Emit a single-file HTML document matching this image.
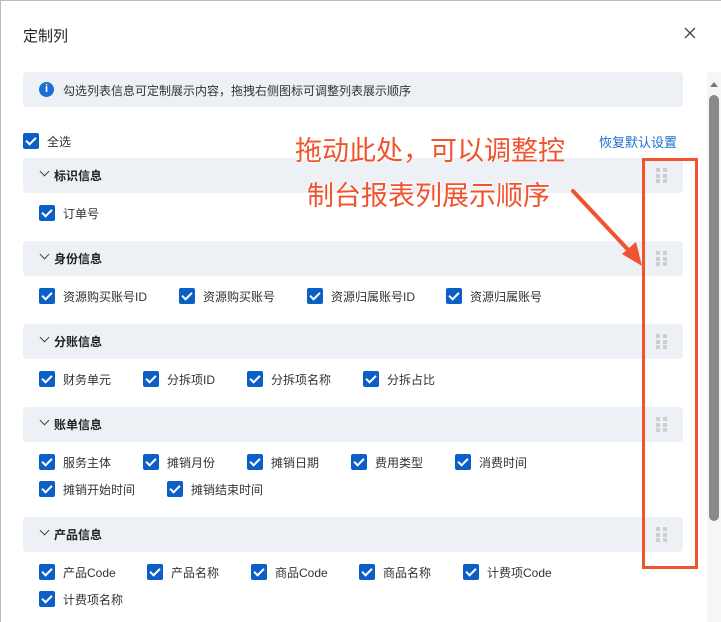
<!DOCTYPE html><html><head><meta charset="utf-8"><style>
body{margin:0;width:721px;height:622px;overflow:hidden;background:#fff;font-family:"Liberation Sans","Noto Sans CJK SC",sans-serif;position:relative}
.a{position:absolute}
.t{font-size:12px;color:#333;white-space:nowrap;margin-top:-1px}
.cb{position:absolute;width:16px;height:16px;background:#0b5fc6;border-radius:2px}
.cb:after{content:"";position:absolute;left:5px;top:2px;width:4px;height:8px;border:solid #fff;border-width:0 2px 2px 0;transform:rotate(45deg)}
.sec{position:absolute;left:23px;width:660px;height:35px;background:#edf0f5;border-radius:4px}
.sec span{position:absolute;left:31px;top:9px;font-size:12px;font-weight:bold;color:#222}
.sec i{position:absolute;left:18px;top:10px;width:6px;height:6px;border:solid #444;border-width:0 1.5px 1.5px 0;transform:rotate(45deg)}
.dr{position:absolute;left:633px;top:10px;width:11px;height:15px;background:
linear-gradient(#cfcfcf,#cfcfcf) 0 0/4px 4px,linear-gradient(#cfcfcf,#cfcfcf) 7px 0/4px 4px,
linear-gradient(#cfcfcf,#cfcfcf) 0 5.5px/4px 4px,linear-gradient(#cfcfcf,#cfcfcf) 7px 5.5px/4px 4px,
linear-gradient(#cfcfcf,#cfcfcf) 0 11px/4px 4px,linear-gradient(#cfcfcf,#cfcfcf) 7px 11px/4px 4px;background-repeat:no-repeat}
.red{position:absolute;color:#f0542e;font-size:27px;white-space:nowrap;text-shadow:0 0 2px #fff,0 0 2px #fff,0 0 3px #fff}
</style></head><body>
<div class="a" style="left:0;top:0;width:721px;height:1px;background:#bbb"></div>
<div class="a" style="left:0;top:0;width:1px;height:622px;background:#bbb"></div>
<div class="a" style="left:23px;top:25px;font-size:15px;color:#222">定制列</div>
<svg class="a" style="left:684px;top:27px" width="12" height="12"><path d="M1 1L11 11M11 1L1 11" stroke="#444" stroke-width="1.3"/></svg>
<div class="a" style="left:23px;top:72px;width:660px;height:35px;background:#edf0f5;border-radius:4px"></div>
<div class="a" style="left:39px;top:82px;width:15px;height:15px;border-radius:50%;background:#1a6fd1;color:#fff;font-size:11px;font-weight:bold;text-align:center;line-height:15px">i</div>
<div class="a t" style="left:63px;top:83px">勾选列表信息可定制展示内容，拖拽右侧图标可调整列表展示顺序</div>
<div class="cb" style="left:23px;top:133px"></div><div class="a t" style="left:47px;top:134px">全选</div>
<div class="a" style="left:599px;top:132px;font-size:13px;color:#1a6fd1">恢复默认设置</div>

<div class="sec" style="top:158px"><i></i><span>标识信息</span><div class="dr"></div></div>
<div class="cb" style="left:39px;top:205px"></div><div class="a t" style="left:63px;top:206px">订单号</div>

<div class="sec" style="top:241px"><i></i><span>身份信息</span><div class="dr"></div></div>
<div class="cb" style="left:39px;top:288px"></div><div class="a t" style="left:63px;top:289px">资源购买账号ID</div>
<div class="cb" style="left:179px;top:288px"></div><div class="a t" style="left:203px;top:289px">资源购买账号</div>
<div class="cb" style="left:307px;top:288px"></div><div class="a t" style="left:331px;top:289px">资源归属账号ID</div>
<div class="cb" style="left:446px;top:288px"></div><div class="a t" style="left:470px;top:289px">资源归属账号</div>

<div class="sec" style="top:324px"><i></i><span>分账信息</span><div class="dr"></div></div>
<div class="cb" style="left:39px;top:371px"></div><div class="a t" style="left:63px;top:372px">财务单元</div>
<div class="cb" style="left:143px;top:371px"></div><div class="a t" style="left:167px;top:372px">分拆项ID</div>
<div class="cb" style="left:247px;top:371px"></div><div class="a t" style="left:271px;top:372px">分拆项名称</div>
<div class="cb" style="left:363px;top:371px"></div><div class="a t" style="left:387px;top:372px">分拆占比</div>

<div class="sec" style="top:407px"><i></i><span>账单信息</span><div class="dr"></div></div>
<div class="cb" style="left:39px;top:454px"></div><div class="a t" style="left:63px;top:455px">服务主体</div>
<div class="cb" style="left:143px;top:454px"></div><div class="a t" style="left:167px;top:455px">摊销月份</div>
<div class="cb" style="left:247px;top:454px"></div><div class="a t" style="left:271px;top:455px">摊销日期</div>
<div class="cb" style="left:351px;top:454px"></div><div class="a t" style="left:375px;top:455px">费用类型</div>
<div class="cb" style="left:455px;top:454px"></div><div class="a t" style="left:479px;top:455px">消费时间</div>
<div class="cb" style="left:39px;top:481px"></div><div class="a t" style="left:63px;top:482px">摊销开始时间</div>
<div class="cb" style="left:167px;top:481px"></div><div class="a t" style="left:191px;top:482px">摊销结束时间</div>

<div class="sec" style="top:517px"><i></i><span>产品信息</span><div class="dr"></div></div>
<div class="cb" style="left:39px;top:564px"></div><div class="a t" style="left:63px;top:565px">产品Code</div>
<div class="cb" style="left:147px;top:564px"></div><div class="a t" style="left:171px;top:565px">产品名称</div>
<div class="cb" style="left:251px;top:564px"></div><div class="a t" style="left:275px;top:565px">商品Code</div>
<div class="cb" style="left:359px;top:564px"></div><div class="a t" style="left:383px;top:565px">商品名称</div>
<div class="cb" style="left:463px;top:564px"></div><div class="a t" style="left:487px;top:565px">计费项Code</div>
<div class="cb" style="left:39px;top:591px"></div><div class="a t" style="left:63px;top:592px">计费项名称</div>

<div class="a" style="left:707px;top:72px;width:14px;height:550px;background:#f6f6f6"></div>
<div class="a" style="left:710px;top:82px;width:0;height:0;border-left:4px solid transparent;border-right:4px solid transparent;border-bottom:5px solid #777"></div>
<div class="a" style="left:709px;top:95px;width:10px;height:426px;background:#8a8a8a;border-radius:5px"></div>

<div class="a" style="left:642px;top:158px;width:50px;height:405px;border:3px solid #f0542e"></div>
<div class="red" style="left:295px;top:129px">拖动此处，可以调整控</div>
<div class="red" style="left:307px;top:174px">制台报表列展示顺序</div>
<svg class="a" style="left:560px;top:180px" width="90" height="95"><line x1="13" y1="11" x2="72" y2="74" stroke="#f0542e" stroke-width="4" stroke-linecap="round"/><polygon points="82,86 62,74 76,62" fill="#f0542e"/></svg>
</body></html>
